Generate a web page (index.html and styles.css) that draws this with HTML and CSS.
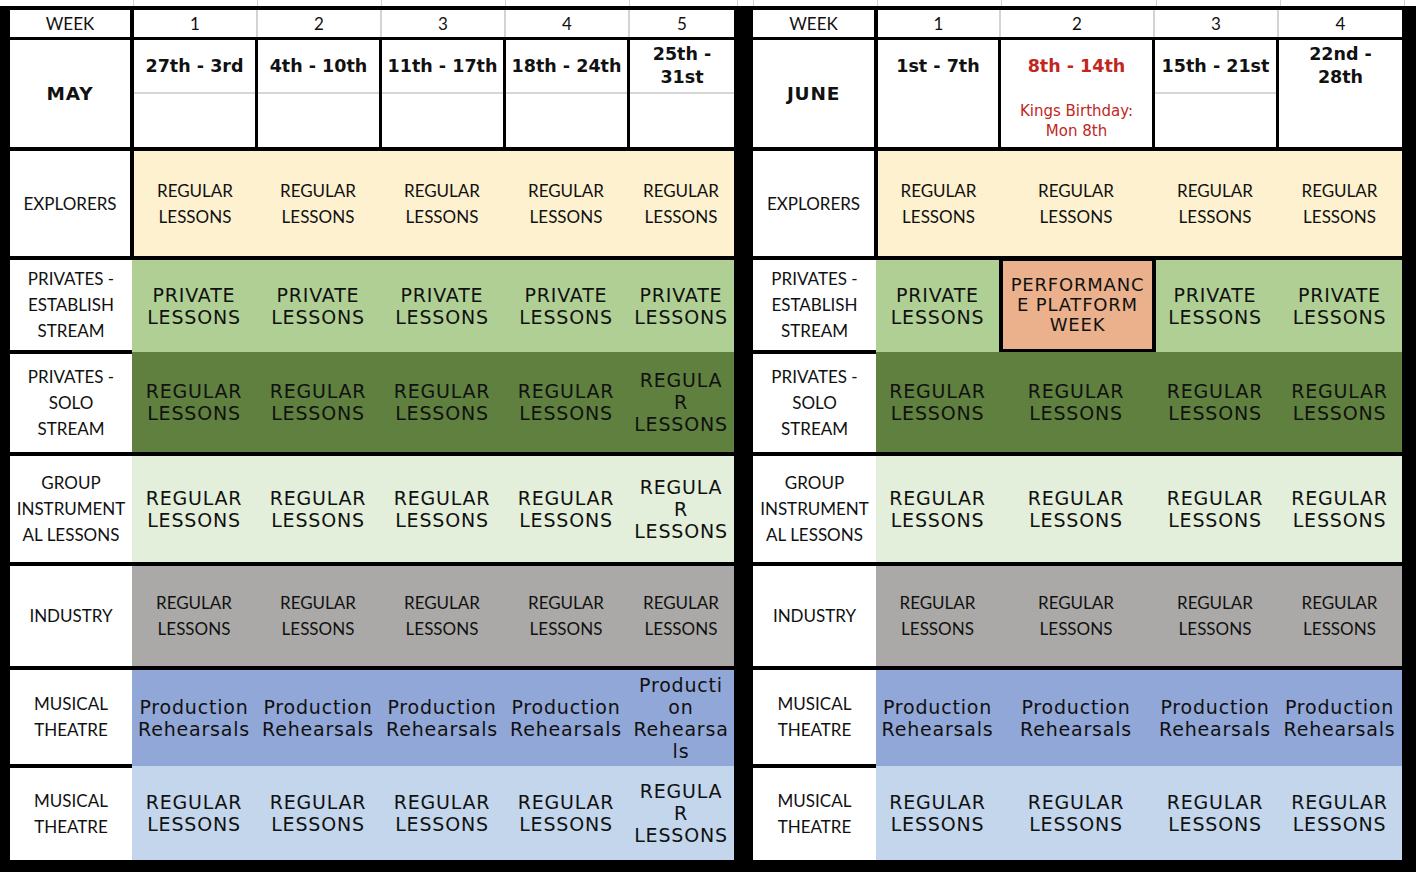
FILE: index.html
```html
<!DOCTYPE html>
<html lang="en">
<head>
<meta charset="utf-8">
<title>Term Timetable</title>
<link rel="stylesheet" href="styles.css">
</head>
<body>
<div class="strip"><span></span><span></span><span></span><span></span><span></span><span></span><span></span><span></span><span></span><span></span><span></span><span></span><span></span></div>
<div class="boards">
  <section class="sheet may">
    <div class="row r-week">
      <div class="lab">WEEK</div>
      <div class="num">1</div><div class="num">2</div><div class="num">3</div><div class="num">4</div><div class="num">5</div>
    </div>
    <div class="row r-date">
      <div class="lab month">MAY</div>
      <div class="d"><div class="top">27th - 3rd</div><div class="bot line"></div></div>
      <div class="d"><div class="top">4th - 10th</div><div class="bot line"></div></div>
      <div class="d"><div class="top">11th - 17th</div><div class="bot line"></div></div>
      <div class="d"><div class="top">18th - 24th</div><div class="bot line"></div></div>
      <div class="d"><div class="top">25th -<br>31st</div><div class="bot line"></div></div>
    </div>
    <div class="row r-exp">
      <div class="lab">EXPLORERS</div>
      <div class="c cal">REGULAR<br>LESSONS</div>
      <div class="c cal">REGULAR<br>LESSONS</div>
      <div class="c cal">REGULAR<br>LESSONS</div>
      <div class="c cal">REGULAR<br>LESSONS</div>
      <div class="c cal">REGULAR<br>LESSONS</div>
    </div>
    <div class="row r-est">
      <div class="lab">PRIVATES -<br>ESTABLISH<br>STREAM</div>
      <div class="c">PRIVATE<br>LESSONS</div>
      <div class="c">PRIVATE<br>LESSONS</div>
      <div class="c">PRIVATE<br>LESSONS</div>
      <div class="c">PRIVATE<br>LESSONS</div>
      <div class="c">PRIVATE<br>LESSONS</div>
    </div>
    <div class="row r-solo">
      <div class="lab">PRIVATES -<br>SOLO<br>STREAM</div>
      <div class="c">REGULAR<br>LESSONS</div>
      <div class="c">REGULAR<br>LESSONS</div>
      <div class="c">REGULAR<br>LESSONS</div>
      <div class="c">REGULAR<br>LESSONS</div>
      <div class="c">REGULA<br>R<br>LESSONS</div>
    </div>
    <div class="row r-grp">
      <div class="lab">GROUP<br>INSTRUMENT<br>AL LESSONS</div>
      <div class="c">REGULAR<br>LESSONS</div>
      <div class="c">REGULAR<br>LESSONS</div>
      <div class="c">REGULAR<br>LESSONS</div>
      <div class="c">REGULAR<br>LESSONS</div>
      <div class="c">REGULA<br>R<br>LESSONS</div>
    </div>
    <div class="row r-ind">
      <div class="lab">INDUSTRY</div>
      <div class="c cal">REGULAR<br>LESSONS</div>
      <div class="c cal">REGULAR<br>LESSONS</div>
      <div class="c cal">REGULAR<br>LESSONS</div>
      <div class="c cal">REGULAR<br>LESSONS</div>
      <div class="c cal">REGULAR<br>LESSONS</div>
    </div>
    <div class="row r-mt1">
      <div class="lab">MUSICAL<br>THEATRE</div>
      <div class="c">Production<br>Rehearsals</div>
      <div class="c">Production<br>Rehearsals</div>
      <div class="c">Production<br>Rehearsals</div>
      <div class="c">Production<br>Rehearsals</div>
      <div class="c">Producti<br>on<br>Rehearsa<br>ls</div>
    </div>
    <div class="row r-mt2">
      <div class="lab">MUSICAL<br>THEATRE</div>
      <div class="c">REGULAR<br>LESSONS</div>
      <div class="c">REGULAR<br>LESSONS</div>
      <div class="c">REGULAR<br>LESSONS</div>
      <div class="c">REGULAR<br>LESSONS</div>
      <div class="c">REGULA<br>R<br>LESSONS</div>
    </div>
  </section>

  <section class="sheet june">
    <div class="row r-week">
      <div class="lab">WEEK</div>
      <div class="num">1</div><div class="num">2</div><div class="num">3</div><div class="num">4</div>
    </div>
    <div class="row r-date">
      <div class="lab month">JUNE</div>
      <div class="d"><div class="top">1st - 7th</div><div class="bot"></div></div>
      <div class="d holiday"><div class="top">8th - 14th</div><div class="bot note">Kings Birthday:<br>Mon 8th</div></div>
      <div class="d"><div class="top">15th - 21st</div><div class="bot line"></div></div>
      <div class="d"><div class="top">22nd -<br>28th</div><div class="bot"></div></div>
    </div>
    <div class="row r-exp">
      <div class="lab">EXPLORERS</div>
      <div class="c cal">REGULAR<br>LESSONS</div>
      <div class="c cal">REGULAR<br>LESSONS</div>
      <div class="c cal">REGULAR<br>LESSONS</div>
      <div class="c cal">REGULAR<br>LESSONS</div>
    </div>
    <div class="row r-est">
      <div class="lab">PRIVATES -<br>ESTABLISH<br>STREAM</div>
      <div class="c">PRIVATE<br>LESSONS</div>
      <div class="c perf">PERFORMANC<br>E PLATFORM<br>WEEK</div>
      <div class="c">PRIVATE<br>LESSONS</div>
      <div class="c">PRIVATE<br>LESSONS</div>
    </div>
    <div class="row r-solo">
      <div class="lab">PRIVATES -<br>SOLO<br>STREAM</div>
      <div class="c">REGULAR<br>LESSONS</div>
      <div class="c">REGULAR<br>LESSONS</div>
      <div class="c">REGULAR<br>LESSONS</div>
      <div class="c">REGULAR<br>LESSONS</div>
    </div>
    <div class="row r-grp">
      <div class="lab">GROUP<br>INSTRUMENT<br>AL LESSONS</div>
      <div class="c">REGULAR<br>LESSONS</div>
      <div class="c">REGULAR<br>LESSONS</div>
      <div class="c">REGULAR<br>LESSONS</div>
      <div class="c">REGULAR<br>LESSONS</div>
    </div>
    <div class="row r-ind">
      <div class="lab">INDUSTRY</div>
      <div class="c cal">REGULAR<br>LESSONS</div>
      <div class="c cal">REGULAR<br>LESSONS</div>
      <div class="c cal">REGULAR<br>LESSONS</div>
      <div class="c cal">REGULAR<br>LESSONS</div>
    </div>
    <div class="row r-mt1">
      <div class="lab">MUSICAL<br>THEATRE</div>
      <div class="c">Production<br>Rehearsals</div>
      <div class="c">Production<br>Rehearsals</div>
      <div class="c">Production<br>Rehearsals</div>
      <div class="c">Production<br>Rehearsals</div>
    </div>
    <div class="row r-mt2">
      <div class="lab">MUSICAL<br>THEATRE</div>
      <div class="c">REGULAR<br>LESSONS</div>
      <div class="c">REGULAR<br>LESSONS</div>
      <div class="c">REGULAR<br>LESSONS</div>
      <div class="c">REGULAR<br>LESSONS</div>
    </div>
  </section>
</div>
</body>
</html>
```

FILE: styles.css
```css
html, body {
  margin: 0;
  padding: 0;
}
body {
  background: #000;
  width: 1416px;
  height: 872px;
  overflow: hidden;
  color: #111;
  font-family: Lato, "Liberation Sans", sans-serif;
}

/* spreadsheet strip above the tables */
.strip {
  height: 6px;
  background: #fff;
  display: grid;
  grid-template-columns: 134px 124px 124px 124px 124px 108px 16px 124px 124px 155px 124px 124px 1fr;
  margin-bottom: 4px;
}
.strip span {
  border-right: 1px solid #d2d2d2;
}
.strip span:last-child {
  border-right: 0;
}

.boards {
  display: flex;
  gap: 19px;
  padding-left: 10px;
}
.sheet.may {
  width: 724px;
  --cols: 122px 124px 124px 124px 124px 106px;
}
.sheet.june {
  width: 649px;
  --cols: 123px 123px 154px 124px 125px;
}

.row {
  display: grid;
  grid-template-columns: var(--cols);
}

.lab {
  background: #fff;
  display: flex;
  align-items: center;
  justify-content: center;
  text-align: center;
  font-size: 17px;
  line-height: 26px;
  white-space: nowrap;
}

.c {
  display: flex;
  align-items: center;
  justify-content: center;
  text-align: center;
  white-space: nowrap;
  font-family: "DejaVu Sans", Verdana, sans-serif;
  font-size: 19px;
  letter-spacing: 0.8px;
  line-height: 22px;
  color: #111;
}
.c.cal {
  font-family: Lato, "Liberation Sans", sans-serif;
  font-size: 17px;
  letter-spacing: 0;
  line-height: 26px;
}

/* week row */
.r-week {
  height: 27px;
  margin-bottom: 3px;
}
.r-week .lab {
  margin-right: 2px;
}
.num {
  background: #fff;
  display: flex;
  align-items: center;
  justify-content: center;
  font-size: 17px;
  border-left: 2px solid #d4d4d4;
}
.r-week .lab + .num {
  border-left: 0;
  margin-left: 2px;
}

/* date row */
.r-date {
  height: 107px;
  margin-bottom: 4px;
}
.r-date .lab {
  margin-right: 2px;
}
.month {
  font-family: "DejaVu Sans", Verdana, sans-serif;
  font-weight: bold;
  font-size: 18.5px;
  letter-spacing: 0.8px;
  color: #111;
}
.d {
  background: #fff;
  margin: 0 1px 0 2px;
  display: flex;
  flex-direction: column;
}
.d:last-child {
  margin-right: 0;
}
.d .top {
  height: 52px;
  display: flex;
  align-items: center;
  justify-content: center;
  text-align: center;
  font-family: "DejaVu Sans", Verdana, sans-serif;
  font-weight: bold;
  font-size: 17.5px;
  line-height: 23px;
  color: #111;
  white-space: nowrap;
}
.d .bot {
  flex: 1;
  border-top: 2px solid transparent;
}
.d .bot.line {
  border-top-color: #d6d6d6;
}
.holiday .top {
  color: #c1271d;
}
.note {
  display: flex;
  align-items: center;
  justify-content: center;
  text-align: center;
  font-family: "DejaVu Sans", Verdana, sans-serif;
  font-size: 15px;
  line-height: 20px;
  color: #c1271d;
}

/* explorers */
.r-exp {
  height: 105px;
  margin-bottom: 4px;
}
.r-exp .lab {
  margin-right: 2px;
}
.r-exp .c {
  background: #fdf1d0;
}
.r-exp .lab + .c {
  margin-left: 2px;
}

/* privates establish */
.r-est {
  height: 92px;
  background: #b0cf94;
}
.r-est .lab {
  border-bottom: 2px solid #000;
}
.perf {
  background: #ebb18c;
  border-style: solid;
  border-color: #000;
  border-width: 1px 4px 3px 4px;
  margin-right: -3px;
  font-size: 18px;
  line-height: 20px;
}

/* privates solo */
.r-solo {
  height: 100px;
  margin-bottom: 4px;
  background: #5f803e;
}
.r-solo .lab {
  border-top: 2px solid #000;
}

/* group instrumental */
.r-grp {
  height: 106px;
  margin-bottom: 4px;
  background: #e3efda;
}

/* industry */
.r-ind {
  height: 100px;
  margin-bottom: 4px;
  background: #aaa9a7;
}

/* musical theatre */
.r-mt1 {
  height: 96px;
  background: #91a7d7;
}
.r-mt1 .lab {
  border-bottom: 2px solid #000;
}
.r-mt2 {
  height: 94px;
  background: #c3d6ec;
}
.r-mt2 .lab {
  border-top: 2px solid #000;
}
```
